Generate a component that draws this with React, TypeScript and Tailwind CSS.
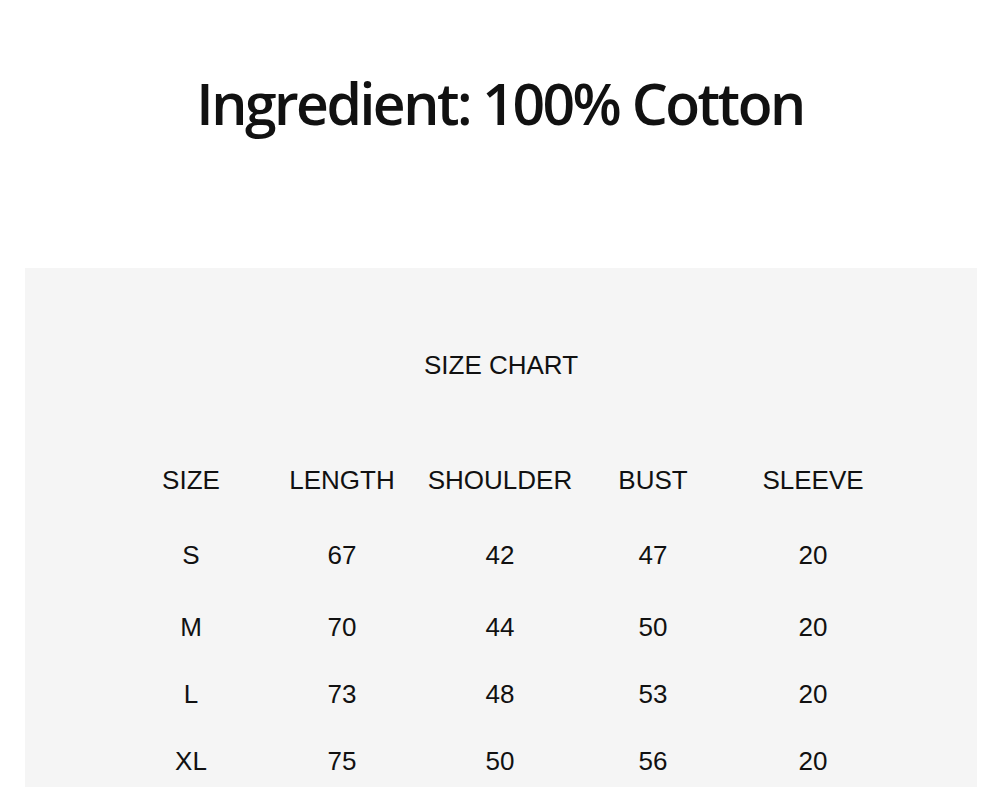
const headers = ['SIZE', 'LENGTH', 'SHOULDER', 'BUST', 'SLEEVE'];

const rows = [
  { cells: ['S', '67', '42', '47', '20'], gap: 'mt-[45px]' },
  { cells: ['M', '70', '44', '50', '20'], gap: 'mt-[42px]' },
  { cells: ['L', '73', '48', '53', '20'], gap: 'mt-[37px]' },
  { cells: ['XL', '75', '50', '56', '20'], gap: 'mt-[37px]' },
];

function Row({ cells, className = '' }: { cells: string[]; className?: string }) {
  return (
    <div
      className={`grid h-[30px] grid-cols-[150px_152px_164px_142px_178px] items-center text-center leading-[30px] ${className}`}
    >
      {cells.map((cell, i) => (
        <span key={i}>{cell}</span>
      ))}
    </div>
  );
}

export default function App() {
  return (
    <div className="h-[787px] w-[1000px] overflow-hidden bg-white">
      <div className="flex h-[268px] justify-center pt-[68px]">
        <h1 className="h-[70px] font-['Open_Sans',sans-serif] text-[57px] leading-[70px] font-semibold tracking-[-2.5px] text-[#111]">
          Ingredient: 100% Cotton
        </h1>
      </div>
      <div className="ml-[25px] h-[519px] w-[952px] bg-[#f5f5f5] pt-[82px] font-['Liberation_Sans',Arial,sans-serif] text-[26px] text-[#111]">
        <div className="h-[30px] text-center leading-[30px]">SIZE CHART</div>
        <div className="mt-[85px] pl-[91px]">
          <Row cells={headers} />
          {rows.map((row, i) => (
            <Row key={i} cells={row.cells} className={row.gap} />
          ))}
        </div>
      </div>
    </div>
  );
}
